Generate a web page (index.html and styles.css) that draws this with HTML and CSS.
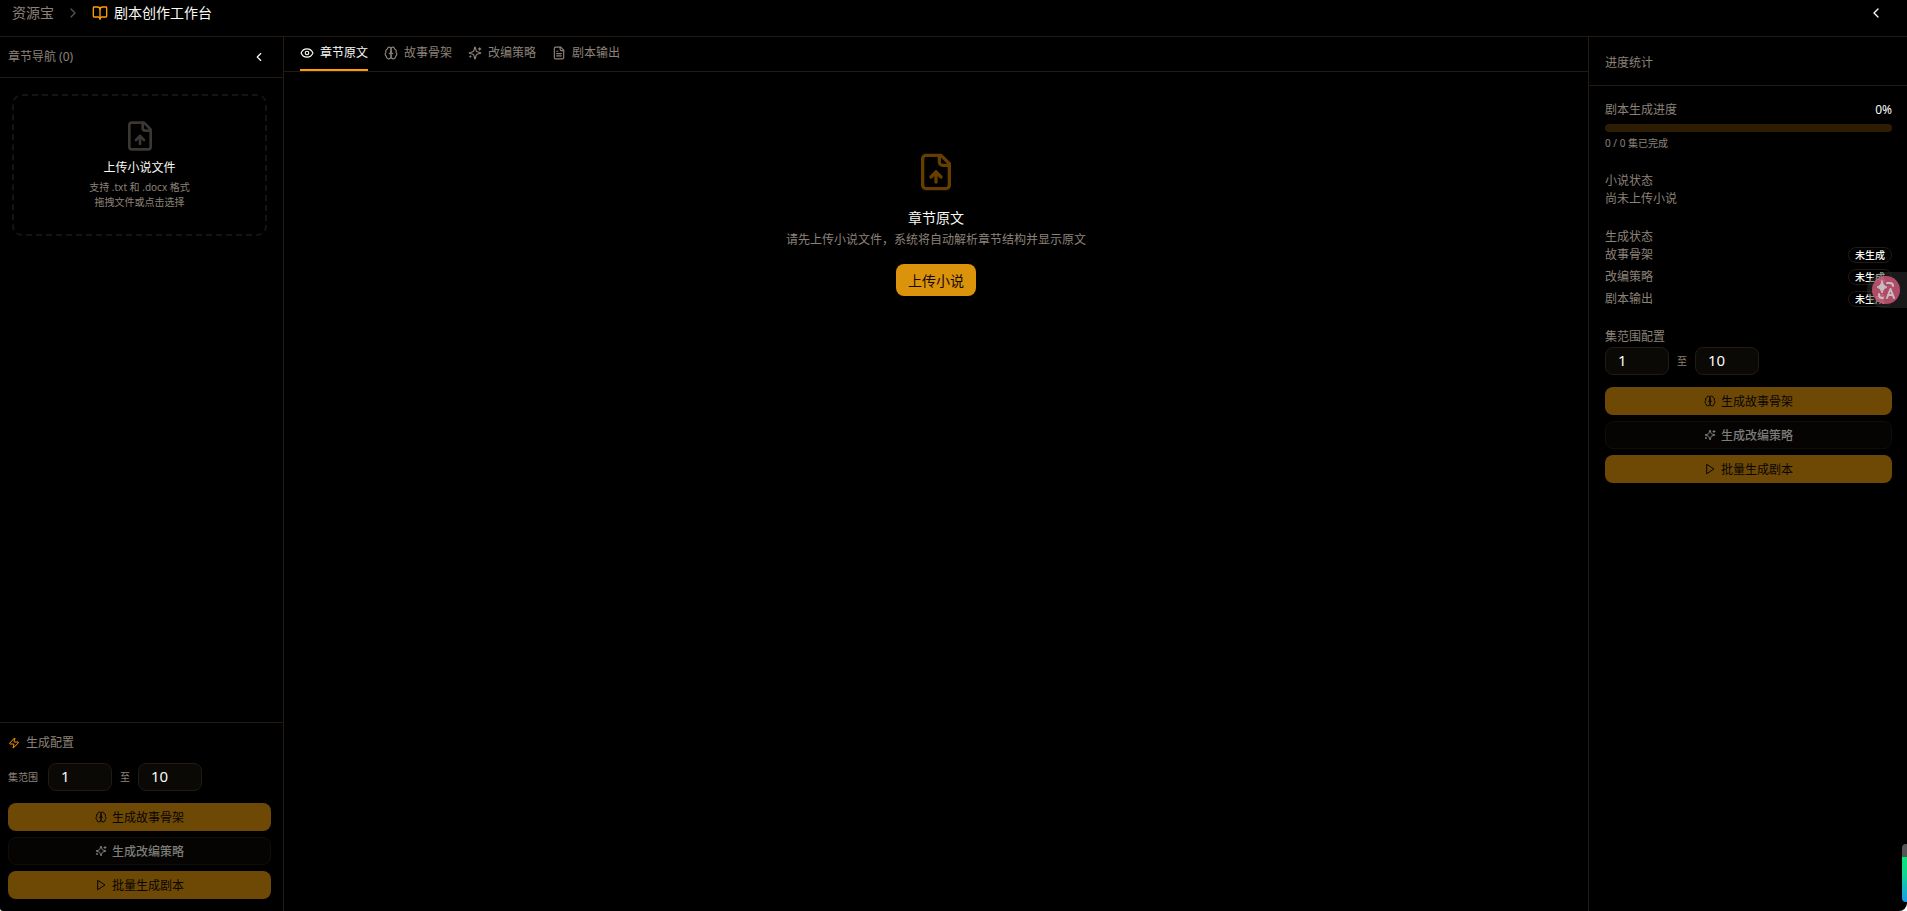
FILE: index.html
```html
<!DOCTYPE html>
<html lang="zh-CN">
<head>
    <meta charset="UTF-8">
    <meta name="viewport" content="width=device-width, initial-scale=1.0">
    <title>剧本创作工作台</title>
    <link rel="stylesheet" href="styles.css">
</head>
<body>
    <!-- Shared icons -->
    <svg class="sprite" aria-hidden="true">
        <symbol id="i-left" viewBox="0 0 24 24"><path d="m15 18-6-6 6-6"/></symbol>
        <symbol id="i-right" viewBox="0 0 24 24"><path d="m9 18 6-6-6-6"/></symbol>
        <symbol id="i-book" viewBox="0 0 24 24"><path d="M12 7v14"/><path d="M3 18a1 1 0 0 1-1-1V4a1 1 0 0 1 1-1h5a4 4 0 0 1 4 4 4 4 0 0 1 4-4h5a1 1 0 0 1 1 1v13a1 1 0 0 1-1 1h-6a3 3 0 0 0-3 3 3 3 0 0 0-3-3z"/></symbol>
        <symbol id="i-upload" viewBox="0 0 24 24"><path d="M15 2H6a2 2 0 0 0-2 2v16a2 2 0 0 0 2 2h12a2 2 0 0 0 2-2V7Z"/><path d="M14 2v4a2 2 0 0 0 2 2h4"/><path d="M12 12v6"/><path d="m15 15-3-3-3 3"/></symbol>
        <symbol id="i-eye" viewBox="0 0 24 24"><path d="M2.062 12.348a1 1 0 0 1 0-.696 10.75 10.75 0 0 1 19.876 0 1 1 0 0 1 0 .696 10.75 10.75 0 0 1-19.876 0"/><circle cx="12" cy="12" r="3"/></symbol>
        <symbol id="i-brain" viewBox="0 0 24 24"><path d="M12 5a3 3 0 1 0-5.997.125 4 4 0 0 0-2.526 5.77 4 4 0 0 0 .556 6.588A4 4 0 1 0 12 18Z"/><path d="M12 5a3 3 0 1 1 5.997.125 4 4 0 0 1 2.526 5.77 4 4 0 0 1-.556 6.588A4 4 0 1 1 12 18Z"/><path d="M15 13a4.5 4.5 0 0 1-3-4 4.5 4.5 0 0 1-3 4"/></symbol>
        <symbol id="i-sparkles" viewBox="0 0 24 24"><path d="M9.937 15.5A2 2 0 0 0 8.5 14.063l-6.135-1.582a.5.5 0 0 1 0-.962L8.5 9.936A2 2 0 0 0 9.937 8.5l1.582-6.135a.5.5 0 0 1 .963 0L14.063 8.5A2 2 0 0 0 15.5 9.937l6.135 1.581a.5.5 0 0 1 0 .964L15.5 14.063a2 2 0 0 0-1.437 1.437l-1.582 6.135a.5.5 0 0 1-.963 0z"/><path d="M20 3v4"/><path d="M22 5h-4"/><path d="M4 17v2"/><path d="M5 18H3"/></symbol>
        <symbol id="i-doc" viewBox="0 0 24 24"><path d="M15 2H6a2 2 0 0 0-2 2v16a2 2 0 0 0 2 2h12a2 2 0 0 0 2-2V7Z"/><path d="M14 2v4a2 2 0 0 0 2 2h4"/><path d="M10 9H8"/><path d="M16 13H8"/><path d="M16 17H8"/></symbol>
        <symbol id="i-zap" viewBox="0 0 24 24"><path d="M4 14a1 1 0 0 1-.78-1.63l9.9-10.2a.5.5 0 0 1 .86.46l-1.92 6.02A1 1 0 0 0 13 10h7a1 1 0 0 1 .78 1.63l-9.9 10.2a.5.5 0 0 1-.86-.46l1.92-6.02A1 1 0 0 0 11 14z"/></symbol>
        <symbol id="i-play" viewBox="0 0 24 24"><path d="M6 3 20 12 6 21Z"/></symbol>
    </svg>

    <div class="app">
        <header class="topbar">
            <nav class="crumbs">
                <a href="#">资源宝</a>
                <svg class="icon icon-16 crumb-sep"><use href="#i-right"/></svg>
                <h1><svg class="icon icon-16"><use href="#i-book"/></svg>剧本创作工作台</h1>
            </nav>
            <button class="icon-btn" aria-label="收起统计"><svg class="icon icon-16"><use href="#i-left"/></svg></button>
        </header>

        <div class="workspace">
            <aside class="chapters">
                <div class="chapters-head">
                    <h2>章节导航 (0)</h2>
                    <button class="icon-btn" aria-label="收起导航"><svg class="icon icon-14"><use href="#i-left"/></svg></button>
                </div>
                <button class="dropzone">
                    <svg class="icon icon-32"><use href="#i-upload"/></svg>
                    <strong>上传小说文件</strong>
                    <small>支持 .txt 和 .docx 格式<br>拖拽文件或点击选择</small>
                </button>
                <section class="config">
                    <h2><svg class="icon icon-12"><use href="#i-zap"/></svg>生成配置</h2>
                    <div class="range">
                        <label class="range-label" for="left-from">集范围</label>
                        <input type="text" id="left-from" value="1">
                        <label for="left-to">至</label>
                        <input type="text" id="left-to" value="10">
                    </div>
                    <div class="actions">
                        <button class="btn btn-primary" disabled><svg class="icon icon-12"><use href="#i-brain"/></svg>生成故事骨架</button>
                        <button class="btn btn-outline" disabled><svg class="icon icon-12"><use href="#i-sparkles"/></svg>生成改编策略</button>
                        <button class="btn btn-primary" disabled><svg class="icon icon-12"><use href="#i-play"/></svg>批量生成剧本</button>
                    </div>
                </section>
            </aside>

            <main class="content">
                <div class="tabs" role="tablist">
                    <button class="tab active" role="tab" aria-selected="true"><svg class="icon icon-14"><use href="#i-eye"/></svg>章节原文</button>
                    <button class="tab" role="tab"><svg class="icon icon-14"><use href="#i-brain"/></svg>故事骨架</button>
                    <button class="tab" role="tab"><svg class="icon icon-14"><use href="#i-sparkles"/></svg>改编策略</button>
                    <button class="tab" role="tab"><svg class="icon icon-14"><use href="#i-doc"/></svg>剧本输出</button>
                </div>
                <div class="empty">
                    <svg class="icon icon-40"><use href="#i-upload"/></svg>
                    <h2>章节原文</h2>
                    <p>请先上传小说文件，系统将自动解析章节结构并显示原文</p>
                    <button class="upload-btn">上传小说</button>
                </div>
            </main>

            <aside class="stats">
                <h2 class="stats-head">进度统计</h2>
                <div class="stats-body">
                    <section>
                        <div class="row"><span>剧本生成进度</span><b>0%</b></div>
                        <div class="track"></div>
                        <p class="done">0 / 0 集已完成</p>
                    </section>
                    <section>
                        <h3>小说状态</h3>
                        <p>尚未上传小说</p>
                    </section>
                    <section>
                        <h3>生成状态</h3>
                        <ul>
                            <li class="row"><span>故事骨架</span><span class="badge">未生成</span></li>
                            <li class="row"><span>改编策略</span><span class="badge">未生成</span></li>
                            <li class="row"><span>剧本输出</span><span class="badge">未生成</span></li>
                        </ul>
                    </section>
                    <section>
                        <h3>集范围配置</h3>
                        <div class="range">
                            <input type="text" id="right-from" value="1" aria-label="起始集">
                            <label for="right-to">至</label>
                            <input type="text" id="right-to" value="10">
                        </div>
                        <div class="actions">
                            <button class="btn btn-primary" disabled><svg class="icon icon-12"><use href="#i-brain"/></svg>生成故事骨架</button>
                            <button class="btn btn-outline" disabled><svg class="icon icon-12"><use href="#i-sparkles"/></svg>生成改编策略</button>
                            <button class="btn btn-primary" disabled><svg class="icon icon-12"><use href="#i-play"/></svg>批量生成剧本</button>
                        </div>
                    </section>
                </div>
            </aside>
        </div>
    </div>

    <button class="translate" aria-label="翻译">
        <svg viewBox="0 0 28 28">
            <path class="star" d="M10 5q1 5 5 6-4 1-5 6-1-5-5-6 4-1 5-6z"/>
            <path d="M15 7h3q3 0 3 3"/>
            <path d="M7 18v1q0 3 3 3h1"/>
            <path d="M15 22l3.500-9 3.500 9M16 19h5"/>
        </svg>
    </button>
    <div class="meter"></div>
</body>
</html>
```
FILE: styles.css
```css
* { box-sizing: border-box; }
html { background: #fff; }
body { margin: 0; font-family: "Noto Sans", "Noto Sans CJK SC", sans-serif; font-size: 12px; line-height: 16px; color: #8c8279; }
h1, h2, h3, p, ul { margin: 0; padding: 0; font-size: 12px; font-weight: 400; }
ul { list-style: none; }
a { color: inherit; text-decoration: none; }
button, input { font-family: inherit; margin: 0; }
button { cursor: pointer; }

.sprite { position: absolute; width: 0; height: 0; }
.icon { flex: none; display: block; fill: none; stroke: currentColor; stroke-width: 2; stroke-linecap: round; stroke-linejoin: round; }
.icon-12 { width: 12px; height: 12px; }
.icon-14 { width: 14px; height: 14px; }
.icon-16 { width: 16px; height: 16px; }
.icon-32 { width: 32px; height: 32px; }
.icon-40 { width: 40px; height: 40px; }
.icon-btn { display: flex; padding: 4px; border: 0; background: none; color: #fafaf5; }

.app { display: flex; flex-direction: column; min-height: 100vh; background: #000; border-radius: 0 0 8px 3px; }

/* top bar */
.topbar { display: flex; justify-content: space-between; align-items: center; padding: 0 19px 10px 12px; border-bottom: 1px solid #221a13; }
.topbar, .topbar h1 { font-size: 14px; line-height: 26px; }
.crumbs { display: flex; align-items: center; gap: 11px; }
.crumb-sep { color: #5a524a; }
.crumbs h1 { display: flex; align-items: center; gap: 6px; color: #fafaf5; }
.crumbs h1 .icon { color: #ff9d00; }

.workspace { flex: 1; display: flex; }

/* left panel */
.chapters { flex: none; width: 284px; display: flex; flex-direction: column; border-right: 1px solid #221a13; }
.chapters-head { display: flex; justify-content: space-between; align-items: center; height: 41px; padding: 0 13px 0 8px; border-bottom: 1px solid #221a13; }
.dropzone { display: flex; flex-direction: column; align-items: center; margin: 16px 16px 0 12px; padding: 24px; border: 2px dashed #17130e; border-radius: 10px; background: none; color: #8c8279; }
.dropzone .icon { color: #3b3732; }
.dropzone strong { margin: 8px 0 4px; font-size: 12px; line-height: 16px; font-weight: 400; color: #fafaf5; }
.dropzone small { font-size: 10px; line-height: 15px; }
.config { margin-top: auto; padding: 12px 12px 12px 8px; border-top: 1px solid #221a13; }
.config h2 { display: flex; align-items: center; gap: 6px; margin-bottom: 12px; }
.config h2 .icon { color: #ff9d00; }

.range { display: flex; align-items: center; gap: 8px; font-size: 10px; }
.range-label { margin-right: 2px; }
.range input { width: 64px; height: 28px; padding: 0 12px 2px; border: 1px solid #221a13; border-radius: 8px; background: #0a0906; color: #fafaf5; font-size: 15px; }
.actions { display: flex; flex-direction: column; gap: 6px; margin-top: 12px; }
.btn { display: flex; align-items: center; justify-content: center; gap: 5px; height: 28px; padding: 0 12px; border: 0; border-radius: 8px; font-size: 12px; }
.btn:disabled { cursor: default; }
.btn-primary { background: #6e4906; color: #080500; }
.btn-outline { background: #050403; border: 1px solid #110d0a; color: #7d7d7a; font-weight: 500; }

/* main area */
.content { flex: 1; min-width: 0; }
.tabs { display: flex; gap: 16px; padding: 0 16px; border-bottom: 1px solid #221a13; }
.tab { display: flex; align-items: center; gap: 6px; padding: 8px 0; border: 0; border-bottom: 2px solid transparent; background: none; color: #8c8279; font-size: 12px; line-height: 16px; }
.tab.active { border-color: #ff9d00; color: #fafaf5; }
.empty { display: flex; flex-direction: column; align-items: center; padding: 80px 16px; text-align: center; }
.empty .icon { color: #663f00; }
.empty h2 { margin: 16px 0 4px; font-size: 14px; line-height: 20px; color: #fafaf5; }
.upload-btn { margin-top: 16px; height: 32px; padding: 0 12px; border: 0; border-radius: 8px; background: #dc930c; color: #100a00; font-size: 14px; }

/* right panel */
.stats { flex: none; width: 319px; border-left: 1px solid #221a13; }
.stats-head { padding: 18px 16px 14px; border-bottom: 1px solid #221a13; }
.stats-body { display: flex; flex-direction: column; gap: 22px; padding: 16px 15px 16px 16px; }
.stats h3 { margin-bottom: 2px; }
.row { display: flex; justify-content: space-between; align-items: center; }
.row b { font-weight: 400; color: #fafaf5; }
.track { height: 8px; margin: 6px 0 4px; border-radius: 4px; background: #2e1d02; }
.stats .done { font-size: 10px; line-height: 15px; }
.stats ul { display: flex; flex-direction: column; gap: 6px; }
.badge { padding: 0 6px; border: 1px solid #221a13; border-radius: 8px; font-size: 10px; line-height: 14px; font-weight: 500; color: #fafaf5; }

/* floating widgets */
.translate { position: fixed; top: 272px; right: 0; width: 40px; height: 36px; padding: 4px 7px 4px 5px; border: 0; border-radius: 18px 0 0 18px; background: rgba(50, 50, 50, .5); }
.translate svg { display: block; width: 28px; height: 28px; border-radius: 50%; background: rgba(212, 90, 124, .8); fill: none; stroke: #c8bcc0; stroke-width: 2; stroke-linecap: round; stroke-linejoin: round; }
.translate .star { fill: #c8bcc0; stroke-width: 1; }
.meter { position: fixed; right: 0; bottom: 9px; width: 5px; height: 58px; border-radius: 4px 0 0 4px; background: linear-gradient(#555 13px, #08e67a 13px, #10d98c 50%, #1c9cf0); }
```
